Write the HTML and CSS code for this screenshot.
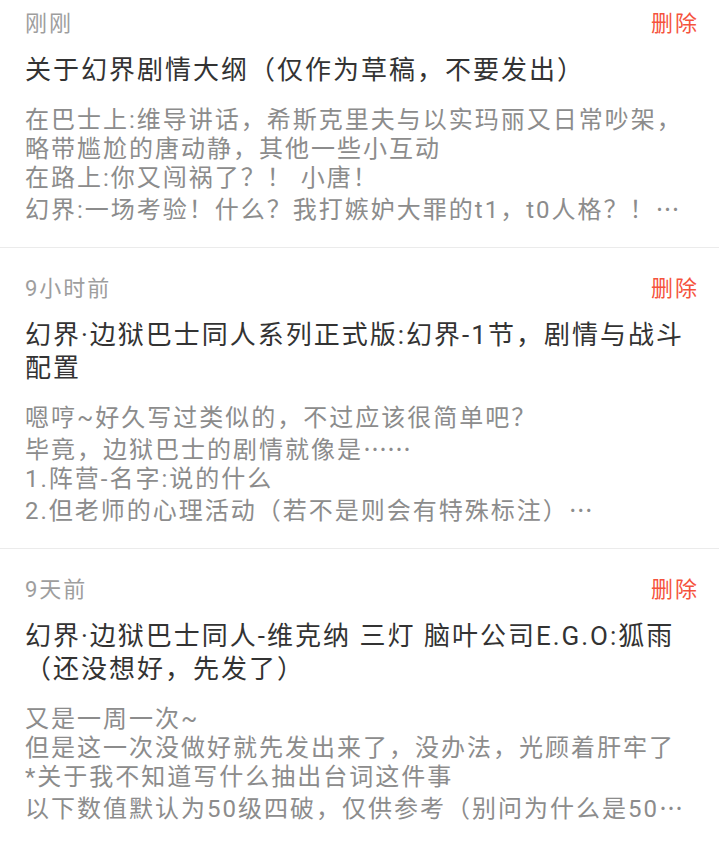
FILE: index.html
```html
<!DOCTYPE html>
<html lang="zh-CN">
<head>
    <meta charset="UTF-8">
    <meta name="viewport" content="width=device-width, initial-scale=1.0">
    <title>草稿箱</title>
    <link rel="stylesheet" href="styles.css">
</head>
<body>
    <div class="draft-list">
        <div class="draft-item">
            <div class="draft-top">
                <span class="draft-time">刚刚</span>
                <span class="draft-delete">删除</span>
            </div>
            <div class="draft-title">关于幻界剧情大纲（仅作为草稿，不要发出）</div>
            <div class="draft-body">
                <div class="body-line">在巴士上:维导讲话，希斯克里夫与以实玛丽又日常吵架，</div>
                <div class="body-line">略带尴尬的唐动静，其他一些小互动</div>
                <div class="body-line">在路上:你又闯祸了？！ 小唐！</div>
                <div class="body-line">幻界:一场考验！什么？我打嫉妒大罪的t1，t0人格？！<span class="more">…</span></div>
            </div>
        </div>

        <div class="draft-item">
            <div class="draft-top">
                <span class="draft-time">9小时前</span>
                <span class="draft-delete">删除</span>
            </div>
            <div class="draft-title">幻界·边狱巴士同人系列正式版:幻界-1节，剧情与战斗配置</div>
            <div class="draft-body">
                <div class="body-line">嗯哼~好久写过类似的，不过应该很简单吧？</div>
                <div class="body-line">毕竟，边狱巴士的剧情就像是<span class="more">……</span></div>
                <div class="body-line">1.阵营-名字:说的什么</div>
                <div class="body-line">2.但老师的心理活动（若不是则会有特殊标注）<span class="more">…</span></div>
            </div>
        </div>

        <div class="draft-item">
            <div class="draft-top">
                <span class="draft-time">9天前</span>
                <span class="draft-delete">删除</span>
            </div>
            <div class="draft-title">幻界·边狱巴士同人-维克纳 三灯 脑叶公司E.G.O:狐雨（还没想好，先发了）</div>
            <div class="draft-body">
                <div class="body-line">又是一周一次~</div>
                <div class="body-line">但是这一次没做好就先发出来了，没办法，光顾着肝牢了</div>
                <div class="body-line">*关于我不知道写什么抽出台词这件事</div>
                <div class="body-line">以下数值默认为50级四破，仅供参考（别问为什么是50<span class="more">…</span></div>
            </div>
        </div>
    </div>
</body>
</html>
```

FILE: styles.css
```css
body {
    margin: 0;
    padding: 0;
    background: #ffffff;
    font-family: Roboto, "Noto Sans CJK SC", sans-serif;
    overflow: hidden;
}

/* list is scrolled a little, first item cut at the top */
.draft-list {
    margin-top: -17px;
}

.draft-item {
    padding: 23px 22px 22px 25px;
    border-bottom: 1px solid #ebebeb;
}

.draft-top {
    display: flex;
    justify-content: space-between;
    align-items: center;
    height: 30px;
    font-size: 22px;
    letter-spacing: 2px;
}

.draft-time {
    color: #9e9e9e;
}

.draft-delete {
    color: #f5533d;
    margin-right: -2px;
}

.draft-title {
    margin-top: 18px;
    font-size: 26px;
    line-height: 33px;
    letter-spacing: 2px;
    color: #333333;
}

.draft-body {
    margin-top: 19px;
    font-size: 24px;
    line-height: 29px;
    letter-spacing: 2px;
    color: #8c8c8c;
}

.body-line {
    white-space: nowrap;
}

/* ellipsis dots sit mid-height, CJK style */
.more {
    font-family: "Noto Sans CJK SC", sans-serif;
    letter-spacing: 0;
}
```
